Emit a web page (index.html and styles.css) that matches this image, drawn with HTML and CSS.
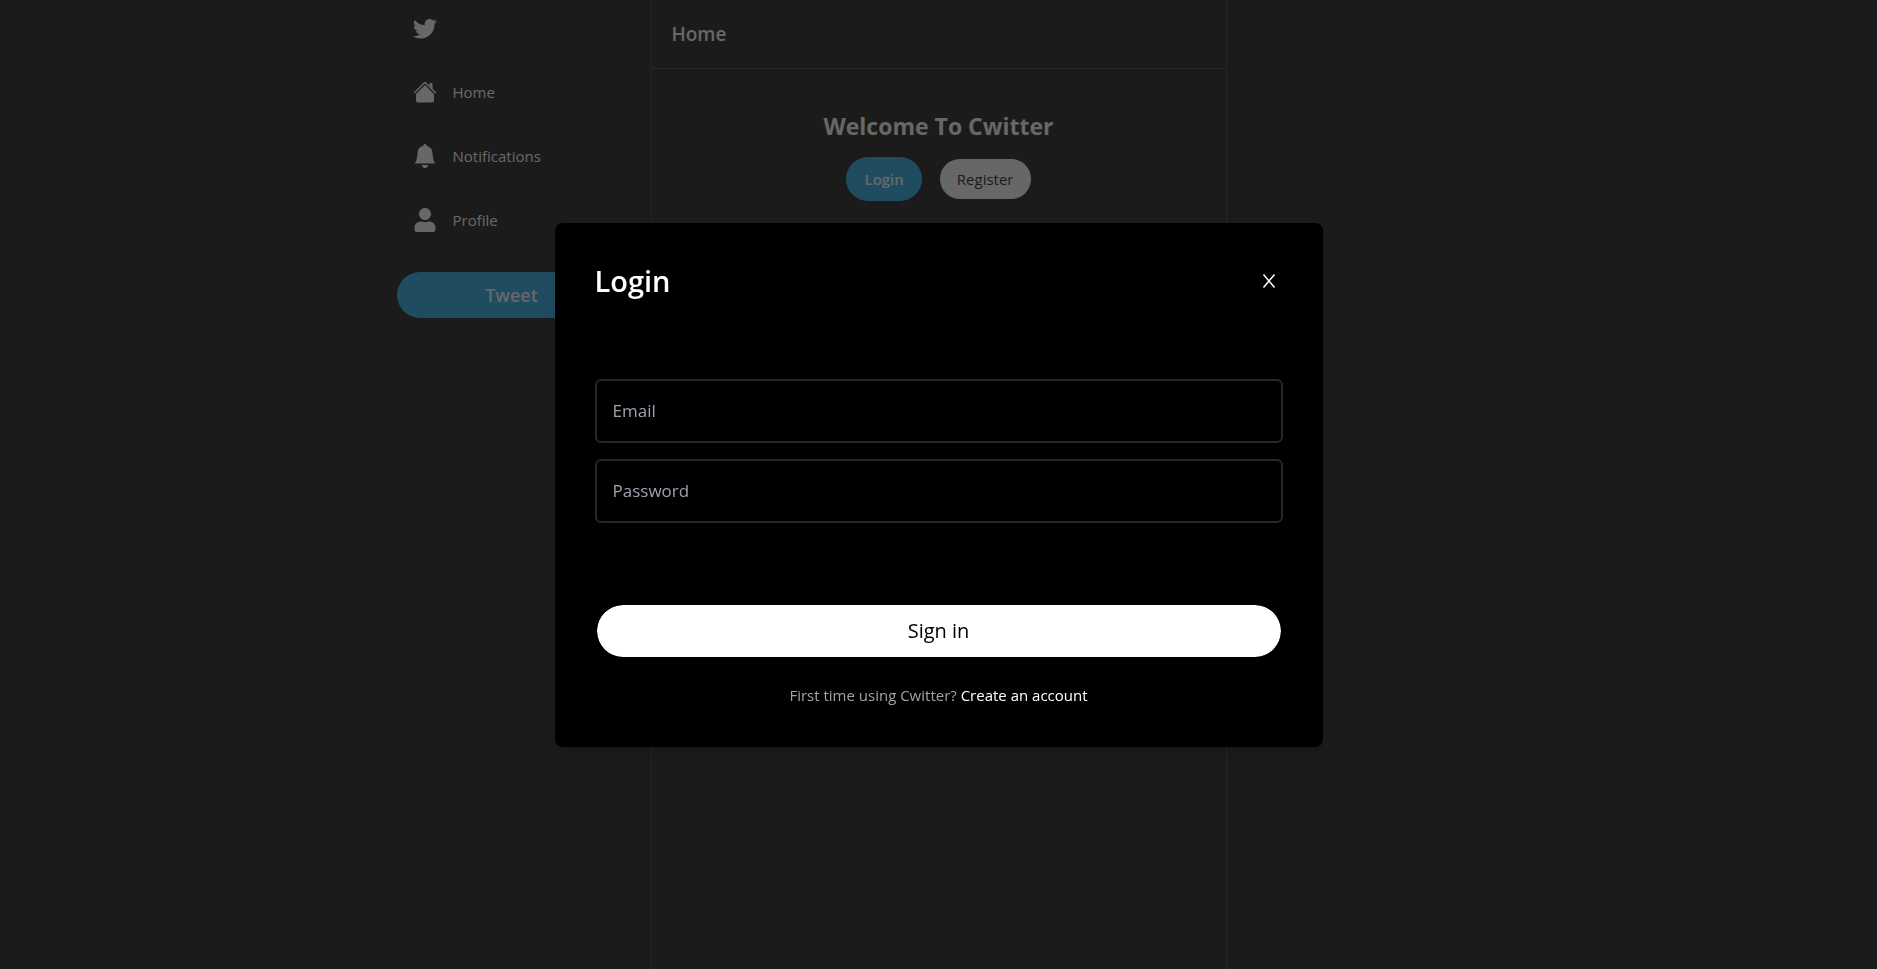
FILE: index.html
```html
<!DOCTYPE html>
<html lang="en">
<head>
<meta charset="utf-8">
<title>Cwitter</title>
<meta name="viewport" content="width=device-width, initial-scale=1">
<link rel="stylesheet" href="styles.css">
</head>
<body>
<div class="layout">
  <aside class="sidebar">
    <nav class="nav">
      <a class="nav-item" href="#" aria-label="Cwitter">
        <svg class="icon" viewBox="0 0 16 16" aria-hidden="true"><path d="M5.026 15c6.038 0 9.341-5.003 9.341-9.334 0-.14 0-.282-.006-.422A6.685 6.685 0 0 0 16 3.542a6.658 6.658 0 0 1-1.889.518 3.301 3.301 0 0 0 1.447-1.817 6.533 6.533 0 0 1-2.087.793A3.286 3.286 0 0 0 7.875 6.03a9.325 9.325 0 0 1-6.767-3.429 3.289 3.289 0 0 0 1.018 4.382A3.323 3.323 0 0 1 .64 6.575v.045a3.288 3.288 0 0 0 2.632 3.218 3.203 3.203 0 0 1-.865.115 3.23 3.23 0 0 1-.614-.057 3.283 3.283 0 0 0 3.067 2.277A6.588 6.588 0 0 1 .78 13.58a6.32 6.32 0 0 1-.78-.045A9.344 9.344 0 0 0 5.026 15z"/></svg>
      </a>
      <a class="nav-item" href="#">
        <svg class="icon" viewBox="0 0 16 16" aria-hidden="true"><path d="m8 3.293 6 6V13.5a1.5 1.5 0 0 1-1.5 1.5h-9A1.5 1.5 0 0 1 2 13.5V9.293l6-6zm5-.793V6l-2-2V2.5a.5.5 0 0 1 .5-.5h1a.5.5 0 0 1 .5.5z"/><path d="M7.293 1.5a1 1 0 0 1 1.414 0l6.647 6.646a.5.5 0 0 1-.708.708L8 2.207 1.354 8.854a.5.5 0 1 1-.708-.708L7.293 1.5z"/></svg>
        <span>Home</span>
      </a>
      <a class="nav-item" href="#">
        <svg class="icon" viewBox="0 0 16 16" aria-hidden="true"><path d="M8 16a2 2 0 0 0 2-2H6a2 2 0 0 0 2 2zm.995-14.901a1 1 0 1 0-1.99 0A5.002 5.002 0 0 0 3 6c0 1.098-.5 6-2 7h14c-1.5-1-2-5.902-2-7 0-2.42-1.72-4.44-4.005-4.901z"/></svg>
        <span>Notifications</span>
      </a>
      <a class="nav-item" href="#">
        <svg class="icon" viewBox="0 0 448 512" aria-hidden="true"><path d="M224 256c70.7 0 128-57.3 128-128S294.7 0 224 0 96 57.3 96 128s57.3 128 128 128zm89.600 32h-16.700c-22.200 10.200-46.900 16-72.900 16s-50.600-5.800-72.900-16h-16.700C60.200 288 0 348.200 0 422.400V464c0 26.500 21.500 48 48 48h352c26.500 0 48-21.500 48-48v-41.600c0-74.200-60.200-134.400-134.400-134.400z"/></svg>
        <span>Profile</span>
      </a>
      <button class="tweet" type="button">Tweet</button>
    </nav>
  </aside>
  <main class="feed">
    <header class="feed-header"><h1 class="feed-title">Home</h1></header>
    <section class="welcome">
      <h2 class="welcome-title">Welcome To Cwitter</h2>
      <div class="welcome-actions">
        <button class="pill pill-primary" type="button">Login</button>
        <button class="pill pill-light" type="button">Register</button>
      </div>
    </section>
  </main>
</div>

<div class="overlay">
  <form class="modal" role="dialog" aria-modal="true" aria-labelledby="modal-title">
    <header class="modal-header">
      <h3 class="modal-title" id="modal-title">Login</h3>
      <button class="close" type="button" aria-label="Close">
        <svg class="close-icon" viewBox="0 0 20 20" aria-hidden="true"><path d="M4.500 3.500 15.500 16.500M15.500 3.500 4.500 16.500"/></svg>
      </button>
    </header>
    <div class="modal-body">
      <input class="field" type="email" placeholder="Email" aria-label="Email">
      <input class="field" type="password" placeholder="Password" aria-label="Password">
    </div>
    <footer class="modal-footer">
      <button class="submit" type="button">Sign in</button>
      <p class="hint">First time using Cwitter? <a class="hint-link" href="#">Create an account</a></p>
    </footer>
  </form>
</div>
</body>
</html>
```
FILE: styles.css
```css
*,
*::before,
*::after {
  box-sizing: border-box;
}

body,
h1,
h2,
h3,
p {
  margin: 0;
}

body {
  background: #000;
  color: #fff;
  font-family: "Segoe UI", "Open Sans", "Noto Sans", sans-serif;
  font-size: 15px;
  line-height: 24px;
}

button,
input {
  font: inherit;
}

button {
  border: 0;
  cursor: pointer;
}

a {
  color: inherit;
  text-decoration: none;
}

.layout {
  display: grid;
  grid-template-columns: 1fr 2fr 1fr;
  max-width: 1152px;
  min-height: 100vh;
  margin: 0 auto;
}

.sidebar {
  display: flex;
  justify-content: flex-end;
  padding-right: 24px;
}

.nav {
  display: flex;
  flex-direction: column;
  gap: 8px;
  width: 230px;
}

.nav-item {
  display: flex;
  align-items: center;
  gap: 16px;
  height: 56px;
  padding: 16px;
}

.icon {
  width: 24px;
  height: 24px;
  fill: #fff;
}

.tweet {
  margin-top: 16px;
  padding: 9px 16px;
  border-radius: 999px;
  background: #0ea5e9;
  color: #fff;
  font-size: 18px;
  font-weight: 600;
  line-height: 28px;
}

.feed {
  border: solid #262626;
  border-width: 0 1px;
}

.feed-header {
  padding: 20px;
  border-bottom: 1px solid #262626;
}

.feed-title {
  font-size: 19px;
  font-weight: 600;
  line-height: 28px;
}

.welcome {
  padding: 40px 32px;
}

.welcome-title {
  margin-bottom: 14px;
  font-size: 23px;
  font-weight: 700;
  line-height: 34px;
  text-align: center;
}

.welcome-actions {
  display: flex;
  align-items: center;
  justify-content: center;
  gap: 18px;
}

.pill {
  padding: 8px 17px;
  border-radius: 999px;
}

.pill-primary {
  padding: 10px 18px;
  background: #0ea5e9;
  color: #fff;
  font-weight: 600;
}

.pill-light {
  background: #fff;
  color: #000;
}

.overlay {
  position: fixed;
  inset: 0;
  display: flex;
  align-items: center;
  justify-content: center;
  background: rgb(38 38 38 / 70%);
}

.modal {
  width: 100%;
  max-width: 768px;
  border-radius: 8px;
  background: #000;
  box-shadow: 0 10px 15px -3px rgb(0 0 0 / 10%), 0 4px 6px -4px rgb(0 0 0 / 10%);
}

.modal-header {
  display: flex;
  align-items: center;
  justify-content: space-between;
  padding: 40px;
}

.modal-title {
  font-size: 29px;
  font-weight: 600;
  line-height: 36px;
}

.close {
  display: flex;
  padding: 4px;
  background: transparent;
}

.close-icon {
  width: 20px;
  height: 20px;
  fill: none;
  stroke: #fff;
  stroke-width: 1.5;
}

.modal-body {
  display: flex;
  flex-direction: column;
  gap: 16px;
  padding: 40px;
}

.field {
  width: 100%;
  padding: 16px;
  border: 2px solid #262626;
  border-radius: 6px;
  background: #000;
  color: #fff;
  font-size: 17px;
  line-height: 28px;
}

.field::placeholder {
  color: #9ca3af;
}

.modal-footer {
  padding: 40px;
}

.submit {
  width: 100%;
  padding: 12px 20px;
  border: 2px solid #000;
  border-radius: 999px;
  background: #fff;
  background-clip: padding-box;
  color: #000;
  font-size: 20px;
  font-weight: 500;
  line-height: 28px;
}

.hint {
  margin-top: 24px;
  color: #a3a3a3;
  text-align: center;
}

.hint-link {
  color: #fff;
  font-weight: 500;
}
```
